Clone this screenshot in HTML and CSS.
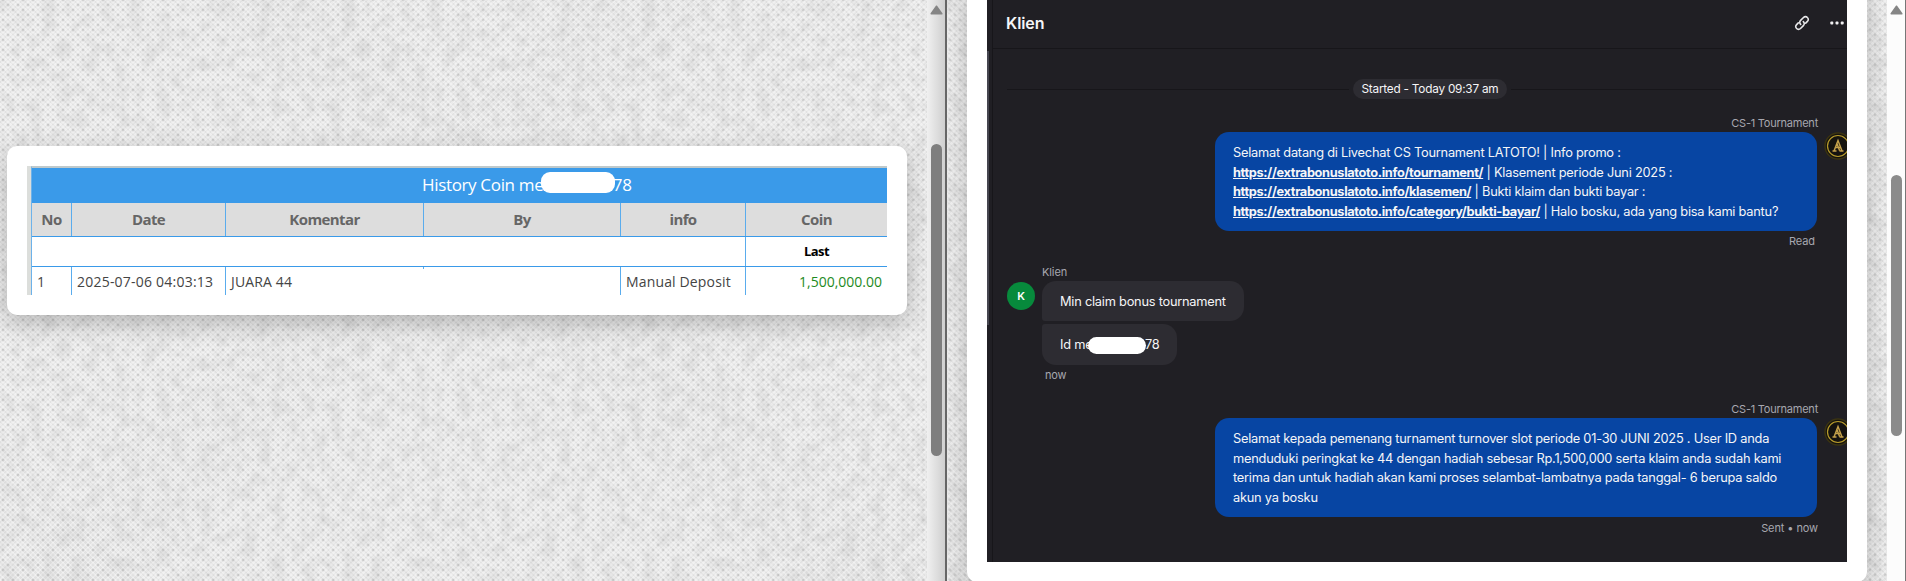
FILE: index.html
```html
<!DOCTYPE html>
<html lang="id">
<head>
    <meta charset="UTF-8">
    <meta name="viewport" content="width=device-width, initial-scale=1.0">
    <title>Bukti Bayar Tournament</title>
    <link rel="stylesheet" href="styles.css">
</head>
<body>

<div class="pane pane-left">
    <div class="page">
        <div class="card card-history">
            <div class="history">
                <div class="history-edge"></div>
                <div class="history-main">
                    <div class="history-title">
                        <span class="title-text">History Coin me</span><span class="mask mask-title"></span><span class="title-text">78</span>
                    </div>
                    <div class="row row-head">
                        <div>No</div>
                        <div>Date</div>
                        <div>Komentar</div>
                        <div>By</div>
                        <div>info</div>
                        <div>Coin</div>
                    </div>
                    <div class="row row-last">
                        <div class="blank"></div>
                        <div>Last</div>
                    </div>
                    <div class="row row-data">
                        <div>1</div>
                        <div class="date">2025-07-06 04:03:13</div>
                        <div class="komentar">JUARA 44</div>
                        <div class="by"></div>
                        <div>Manual Deposit</div>
                        <div class="coin">1,500,000.00</div>
                    </div>
                </div>
            </div>
        </div>
    </div>
    <div class="scrollbar">
        <svg class="arrow" width="13" height="10" viewBox="0 0 13 10"><path d="M6.5 1.2 L11.8 8.8 H1.2 Z"/></svg>
        <div class="thumb"></div>
    </div>
</div>

<div class="pane pane-right">
    <div class="page">
        <div class="card card-chat">
            <div class="chat">
                <div class="side"><div class="side-thumb"></div></div>
                <div class="chat-main">
                    <div class="chat-header">
                        <h1>Klien</h1>
                        <svg class="icon-link" width="16" height="16" viewBox="0 0 16 16">
                            <path d="M6.7 9.4 C5.4 8.1 5.4 6.6 6.6 5.4 L9.5 2.5 C10.7 1.3 12.3 1.3 13.4 2.5 C14.6 3.6 14.6 5.2 13.4 6.4 L11.7 8.1"/>
                            <path d="M9.3 6.6 C10.6 7.9 10.6 9.4 9.4 10.6 L6.5 13.5 C5.3 14.7 3.7 14.7 2.6 13.5 C1.4 12.4 1.4 10.8 2.6 9.6 L4.3 7.9"/>
                        </svg>
                        <svg class="icon-more" width="14" height="4" viewBox="0 0 14 4">
                            <rect x="0.3" y="0.5" width="3" height="3" rx="1"/>
                            <rect x="5.5" y="0.5" width="3" height="3" rx="1"/>
                            <rect x="10.7" y="0.5" width="3" height="3" rx="1"/>
                        </svg>
                    </div>

                    <div class="started"><span>Started - Today 09:37 am</span></div>

                    <div class="agent">
                        <div class="name">CS-1 Tournament</div>
                        <div class="agent-line">
                            <div class="bubble bubble-agent">
                                Selamat datang di Livechat CS Tournament LATOTO! | Info promo :<br>
                                <a>https://extrabonuslatoto.info/tournament/</a> | Klasement periode Juni 2025 :<br>
                                <a>https://extrabonuslatoto.info/klasemen/</a> | Bukti klaim dan bukti bayar :<br>
                                <a>https://extrabonuslatoto.info/category/bukti-bayar/</a> | Halo bosku, ada yang bisa kami bantu?
                            </div>
                            <svg class="badge" width="28" height="28" viewBox="0 0 28 28">
                                <circle class="disc" cx="14" cy="14" r="13"/>
                                <circle class="ring" cx="14" cy="14" r="10.5"/>
                                <path class="mark" d="M8.5 19 H12.5 M10 19 L14 8.5 L18 19 M15.5 19 H19.5 M11.8 15.5 H16.5 M15.6 18.5 L12.7 11"/>
                            </svg>
                        </div>
                        <div class="status status-read">Read</div>
                    </div>

                    <div class="client">
                        <div class="avatar">K</div>
                        <div class="client-body">
                            <div class="name">Klien</div>
                            <div class="bubble bubble-first">Min claim bonus tournament</div>
                            <div class="bubble bubble-second"><span>Id me</span><span class="mask mask-id"></span><span>78</span></div>
                            <div class="status">now</div>
                        </div>
                    </div>

                    <div class="agent agent-second">
                        <div class="name">CS-1 Tournament</div>
                        <div class="agent-line">
                            <div class="bubble bubble-agent">
                                Selamat kepada pemenang turnament turnover slot periode 01-30 JUNI 2025 . User ID anda<br>
                                menduduki peringkat ke 44 dengan hadiah sebesar Rp.1,500,000 serta klaim anda sudah kami<br>
                                terima dan untuk hadiah akan kami proses selambat-lambatnya pada tanggal- 6 berupa saldo<br>
                                akun ya bosku
                            </div>
                            <svg class="badge" width="28" height="28" viewBox="0 0 28 28">
                                <circle class="disc" cx="14" cy="14" r="13"/>
                                <circle class="ring" cx="14" cy="14" r="10.5"/>
                                <path class="mark" d="M8.5 19 H12.5 M10 19 L14 8.5 L18 19 M15.5 19 H19.5 M11.8 15.5 H16.5 M15.6 18.5 L12.7 11"/>
                            </svg>
                        </div>
                        <div class="status">Sent • now</div>
                    </div>
                </div>
            </div>
        </div>
    </div>
    <div class="scrollbar">
        <svg class="arrow" width="13" height="10" viewBox="0 0 13 10"><path d="M6.5 1.2 L11.8 8.8 H1.2 Z"/></svg>
        <div class="thumb"></div>
    </div>
</div>

</body>
</html>
```
FILE: styles.css
```css
* {
    box-sizing: border-box;
}

body {
    margin: 0;
    height: 581px;
    display: flex;
    overflow: hidden;
    font-family: "Open Sans", "Noto Sans", sans-serif;
}

.pane {
    display: flex;
    height: 581px;
    overflow: hidden;
}

.pane-left {
    width: 947px;
    border-right: 2px solid #666;
}

.pane-right {
    width: 959px;
    border-right: 1px solid #777;
}

/* fabric texture */
.page {
    flex: 1;
    min-width: 0;
    background-color: #e8e8e8;
    background-image:
        url("data:image/svg+xml,%3Csvg xmlns='http://www.w3.org/2000/svg' width='300' height='300'%3E%3Cfilter id='n' x='0' y='0' width='100%25' height='100%25'%3E%3CfeTurbulence type='fractalNoise' baseFrequency='0.07' numOctaves='3' seed='4' stitchTiles='stitch'/%3E%3CfeColorMatrix values='0 0 0 0 0.4 0 0 0 0 0.4 0 0 0 0 0.4 0.5 0 0 0 -0.2'/%3E%3C/filter%3E%3Crect width='300' height='300' filter='url(%23n)'/%3E%3C/svg%3E"),
        radial-gradient(circle, rgba(0, 0, 0, 0.17) 0, rgba(0, 0, 0, 0) 2px),
        radial-gradient(circle, rgba(0, 0, 0, 0.17) 0, rgba(0, 0, 0, 0) 2px),
        repeating-linear-gradient(45deg, rgba(255, 255, 255, 0.25) 0 2px, rgba(0, 0, 0, 0.01) 2px 3.54px),
        repeating-linear-gradient(-45deg, rgba(255, 255, 255, 0.25) 0 2px, rgba(0, 0, 0, 0.01) 2px 3.54px);
    background-size: 300px 300px, 10px 10px, 10px 10px, auto, auto;
    background-position: 0 0, 3px 0, 8px 5px, 0 0, 0 0;
}

.card {
    width: 900px;
    background: #fff;
    border-radius: 10px;
    box-shadow: 0 8px 25px rgba(0, 0, 0, 0.22);
}

.card-history {
    margin: 146px 0 0 7px;
    height: 169px;
    padding: 20px;
}

.card-chat {
    margin: -20px 0 0 20px;
    height: 602px;
    padding: 20px;
}

/* scrollbars */
.scrollbar {
    width: 18px;
    background: #fcfcfc;
    display: flex;
    flex-direction: column;
    align-items: center;
    padding-top: 5px;
}

.pane-left .scrollbar {
    background: linear-gradient(to right, #f0f0f0, #cfcfcf);
}

.arrow {
    fill: #858585;
    stroke: #858585;
    stroke-width: 1.5;
    stroke-linejoin: round;
}

.thumb {
    width: 11px;
    border-radius: 6px;
    background: #8b8b8b;
}

.pane-left .thumb {
    margin-top: 129px;
    height: 312px;
    background: #7e7e7e;
}

.pane-right .thumb {
    margin-top: 160px;
    height: 261px;
}

/* history table */
.history {
    display: flex;
    height: 129px;
    overflow: hidden;
}

.history-edge {
    width: 4px;
    background: #dcdedb;
}

.history-main {
    flex: 1;
    border-top: 2px solid #bfc9cb;
    border-left: 1px solid #6db2ea;
}

.history-title {
    height: 35px;
    background: #3a9ae9;
    color: #fff;
    font-size: 17px;
    display: flex;
    align-items: center;
    padding: 0 0 2px 390px;
    letter-spacing: -0.34px;
}

.title-text {
    white-space: nowrap;
}

.mask {
    background: #fff;
    flex: none;
    position: relative;
    z-index: 1;
}

.mask-title {
    width: 74px;
    height: 21px;
    border-radius: 9px;
    margin: -4px -2px 0 -2.5px;
}

.row {
    display: grid;
    grid-template-columns: 40px 154px 198px 197px 125px 141px;
}

.row > div {
    border-right: 1px solid #5aaced;
    white-space: nowrap;
}

.row > div:last-child {
    border-right: none;
}

.row-head {
    height: 34px;
    line-height: 33px;
    background: #ddd;
    color: #666;
    font-size: 15px;
    font-weight: bold;
    text-align: center;
    letter-spacing: -0.6px;
    border-bottom: 1px solid #3a9ae9;
}

.row-last {
    height: 30px;
    line-height: 29px;
    font-size: 13px;
    font-weight: bold;
    text-align: center;
    color: #000;
    letter-spacing: -0.6px;
    border-bottom: 1px solid #3a9ae9;
}

.row-last .blank {
    grid-column: 1 / 6;
}

.row-data {
    height: 30px;
    line-height: 30px;
    font-size: 14px;
    color: #444;
    letter-spacing: 0.15px;
}

.row-data > div {
    padding-left: 5px;
}

.row-data .date {
    letter-spacing: 0.22px;
}

/* the divider before "By" fades out after a few pixels */
.row-data .komentar {
    border-right-color: transparent;
    border-image: linear-gradient(#5aaced 3px, transparent 3px) 1;
    border-width: 0 1px 0 0;
}

.row-data .coin {
    color: #1e8a1e;
    text-align: right;
    padding-right: 5px;
    letter-spacing: 0;
}

/* chat */
.chat {
    display: flex;
    width: 860px;
    height: 562px;
    overflow: hidden;
    background: #201f24;
    color: #f5f5f7;
    font-family: Inter, sans-serif;
    font-size: 12.8px;
    letter-spacing: -0.23px;
}

.side {
    width: 6px;
    border-right: 1px solid #17161a;
    padding-top: 51px;
}

.side-thumb {
    width: 2px;
    height: 274px;
    background: #45454f;
}

.chat-main {
    flex: 1;
    min-width: 0;
}

.chat-header {
    height: 49px;
    border-bottom: 1px solid #17161a;
    display: flex;
    align-items: center;
    padding: 0 3px 2px 13px;
}

.chat-header h1 {
    margin: 0;
    flex: 1;
    font-size: 16px;
    font-weight: 600;
    letter-spacing: -0.1px;
}

.icon-link {
    fill: none;
    stroke: #e8e8ea;
    stroke-width: 1.6;
    stroke-linecap: round;
    margin-right: 20px;
}

.icon-more {
    fill: #f0f0f2;
}

.started {
    display: flex;
    align-items: center;
    gap: 4px;
    height: 20px;
    margin: 30px 0 0 14px;
    font-size: 11.8px;
}

.started::before,
.started::after {
    content: "";
    height: 1px;
    background: #17161a;
}

.started::before {
    width: 342px;
}

.started::after {
    flex: 1;
}

.started span {
    width: 154px;
    height: 20px;
    line-height: 20px;
    border-radius: 10px;
    background: #2d2c32;
    text-align: center;
    white-space: nowrap;
}

.name,
.status {
    font-size: 11px;
    line-height: 16px;
    color: #a7a7af;
}

.agent {
    margin-top: 16px;
    height: 134px;
}

.agent .name,
.agent .status {
    text-align: right;
    padding-right: 29px;
}

.agent .status {
    padding-top: 3px;
    letter-spacing: -0.1px;
}

.agent .status-read {
    padding-top: 2px;
    padding-right: 32px;
}

.agent-line {
    display: flex;
    margin-left: 222px;
}

.bubble {
    background: #2d2c32;
    white-space: nowrap;
}

.bubble-agent {
    flex: none;
    width: 602px;
    height: 99px;
    margin-top: 1px;
    padding: 11px 18px 10px;
    border-radius: 14px;
    background: #0745a3;
    line-height: 19.5px;
}

.bubble-agent a {
    font-weight: 700;
    letter-spacing: -0.35px;
    text-decoration: underline;
}

.badge {
    flex: none;
    margin: 1px 0 0 7px;
}

.disc {
    fill: #15130f;
    stroke: #3a3312;
    stroke-width: 1.5;
}

.ring {
    fill: none;
    stroke: #b79b2b;
    stroke-width: 1.2;
}

.mark {
    fill: none;
    stroke: #c3a04a;
    stroke-width: 1.5;
}

.client {
    display: flex;
    gap: 7px;
    margin: 15px 0 0 14px;
    height: 120px;
}

.avatar {
    width: 28px;
    height: 28px;
    margin-top: 18px;
    border-radius: 50%;
    background: #078a3c;
    color: #fff;
    font-size: 11px;
    font-weight: 600;
    line-height: 28px;
    text-align: center;
}

.client .name {
    letter-spacing: -0.1px;
}

.bubble-first {
    width: 202px;
    height: 40px;
    margin-top: 1px;
    padding-left: 18px;
    line-height: 42px;
    border-radius: 14px 14px 14px 3px;
}

.bubble-second {
    width: 135px;
    height: 41px;
    margin-top: 3px;
    padding-left: 18px;
    display: flex;
    align-items: center;
    border-radius: 3px 14px 14px 14px;
}

.mask-id {
    width: 58px;
    height: 17px;
    border-radius: 9px;
    margin: 1px -1px 0 -4.5px;
}

.client .status {
    padding: 2px 0 0 3px;
}

.agent-second {
    margin-top: 17px;
}
```
